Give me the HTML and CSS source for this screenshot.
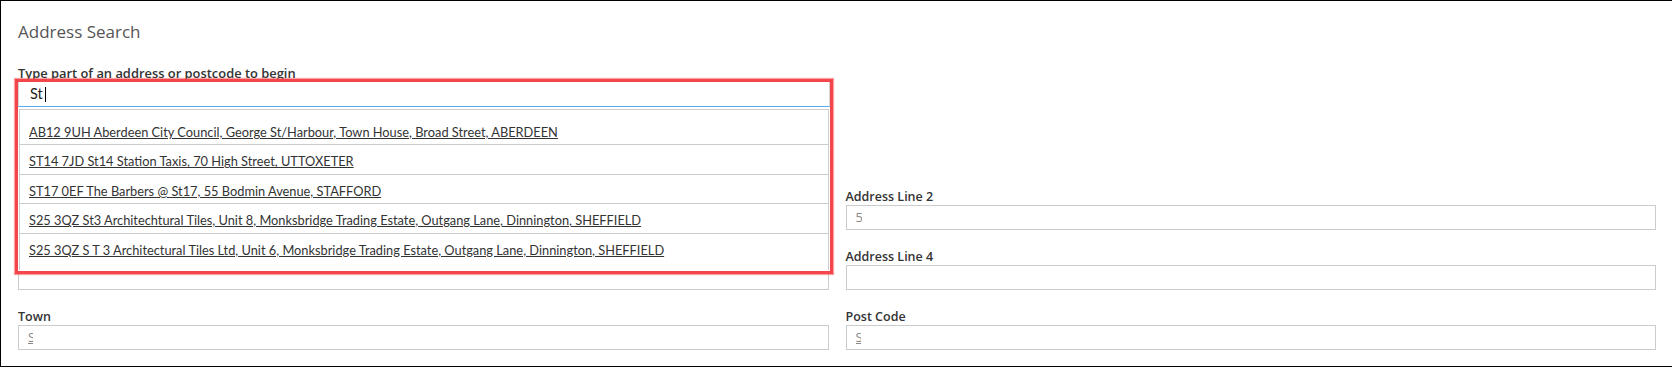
FILE: index.html
```html
<!DOCTYPE html>
<html lang="en">
<head>
  <meta charset="UTF-8" />
  <title>Address Search</title>
  <link rel="stylesheet" href="styles.css">
</head>
<body>
  <div class="panel">
    <h2 class="title">Address Search</h2>

    <div class="search">
      <label class="label search-label">Type part of an address or postcode to begin</label>
      <div class="combo">
        <div class="search-input">St<span class="caret"></span></div>
        <ul class="results">
          <li><a href="#">AB12 9UH Aberdeen City Council, George St/Harbour, Town House, Broad Street, ABERDEEN</a></li>
          <li><a href="#">ST14 7JD St14 Station Taxis, 70 High Street, UTTOXETER</a></li>
          <li><a href="#">ST17 0EF The Barbers @ St17, 55 Bodmin Avenue, STAFFORD</a></li>
          <li><a href="#">S25 3QZ St3 Architechtural Tiles, Unit 8, Monksbridge Trading Estate, Outgang Lane, Dinnington, SHEFFIELD</a></li>
          <li><a href="#">S25 3QZ S T 3 Architectural Tiles Ltd, Unit 6, Monksbridge Trading Estate, Outgang Lane, Dinnington, SHEFFIELD</a></li>
        </ul>
      </div>
    </div>

    <div class="fields">
      <div class="field">
        <label class="label">Address Line 1</label>
        <div class="input"></div>
      </div>
      <div class="field">
        <label class="label">Address Line 2</label>
        <div class="input"><span class="value">5</span></div>
      </div>
      <div class="field">
        <label class="label">Address Line 3</label>
        <div class="input"></div>
      </div>
      <div class="field">
        <label class="label">Address Line 4</label>
        <div class="input"></div>
      </div>
      <div class="field">
        <label class="label">Town</label>
        <div class="input"><span class="value cut">S</span></div>
      </div>
      <div class="field">
        <label class="label">Post Code</label>
        <div class="input"><span class="value cut">S</span></div>
      </div>
    </div>
  </div>
</body>
</html>
```

FILE: styles.css
```css
body {
  margin: 0;
  background: #fff;
  font-family: "Open Sans", Arial, sans-serif;
  color: #333;
}
.panel {
  width: 1672px;
  height: 367px;
  border-top: 1px solid #000;
  border-left: 1px solid #000;
  border-bottom: 1px solid #000;
  padding: 0 16px 0 17px;
  box-sizing: border-box;
  background: #fff;
}
.title {
  margin: 0;
  padding-top: 20px;
  font-size: 17px;
  font-weight: 400;
  line-height: 22px;
  color: #555;
}
.label {
  display: block;
  font-size: 12.5px;
  font-weight: 600;
  line-height: 17px;
  color: #333;
}
.search-label {
  font-size: 12.9px;
}
.search {
  position: relative;
  margin-top: 22px;
  height: 106px;
}
.combo {
  position: absolute;
  z-index: 10;
  top: 14px;
  left: -3px;
  width: 812px;
  height: 189px;
  border: 3px solid #f4464a;
  box-shadow: 0 0 1px 1px rgba(244, 70, 74, 0.5);
  background: #fff;
}
.search-input {
  height: 24px;
  border: 1px solid #d4d4d4;
  border-bottom: 1px solid #5aa9e6;
  border-top: none;
  padding-left: 11px;
  font-family: Lato, "Open Sans", sans-serif;
  font-size: 14.5px;
  line-height: 24px;
  color: #222;
}
.caret {
  display: inline-block;
  width: 1px;
  height: 15px;
  margin-left: 2px;
  vertical-align: -3px;
  background: #000;
}
.results {
  list-style: none;
  margin: 2px 1px 0;
  padding: 6px 0 0;
  border-top: 1px solid #ccc;
  border-left: 1px solid #ccc;
  border-right: 1px solid #ccc;
  height: 154px;
}
.results li {
  height: 28.4px;
  border-bottom: 1px solid #ccc;
  padding-left: 9px;
  line-height: 30px;
}
.results li:last-child {
  border-bottom: none;
}
.results a {
  font-family: Lato, "Open Sans", sans-serif;
  font-size: 12.8px;
  color: #333;
  text-decoration: underline;
}
.fields {
  display: grid;
  grid-template-columns: 1fr 1fr;
  column-gap: 17px;
  margin-top: 17px;
}
.field {
  margin-bottom: 18px;
}
.input {
  height: 23px;
  border: 1px solid #ccc;
  padding-left: 9px;
  font-size: 13px;
  line-height: 23px;
  color: #888;
  overflow: hidden;
}
.value {
  display: inline-block;
  width: 6px;
  overflow: hidden;
  vertical-align: top;
}
.value.cut {
  width: 5px;
  text-decoration: underline;
}
```
